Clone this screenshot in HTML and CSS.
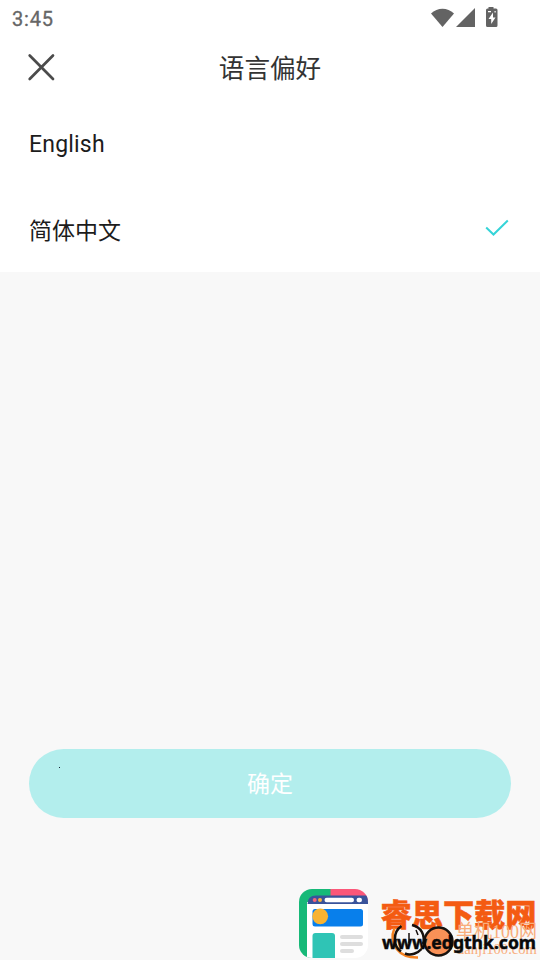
FILE: index.html
```html
<!DOCTYPE html>
<html lang="zh-CN">
<head>
<meta charset="utf-8">
<title>语言偏好</title>
<link rel="stylesheet" href="styles.css">
</head>
<body>
<div class="screen">
  <header class="top">
    <div class="status">
      <span class="time">3:45</span>
      <svg class="status-icons" width="68" height="22" viewBox="0 0 68 22" fill="#636363">
        <path d="M0 7.500C6.500 1.200 16.500 1.200 23 7.500L11.500 21Z"/>
        <path d="M44 2V21H25Z"/>
        <path d="M57.500 1h5v1.500h2.500q1.500 0 1.500 1.500V19.500q0 1.500-1.500 1.500H56.500q-1.500 0-1.500-1.500V4q0-1.500 1.500-1.500h1Z"/>
        <path fill="#fff" d="M62 6.500L57.500 13H60.200V18L64.500 11.500H62ZM57 5h3v1.200H57ZM63.500 5h1.200v1.500H63.500Z"/>
      </svg>
    </div>
    <div class="nav">
      <svg class="close" width="28" height="28" viewBox="0 0 28 28"><path d="M2.700 2.500L26 26M26 2.500L2.700 26" fill="none" stroke="#4b4b4b" stroke-width="2.700" stroke-linecap="round"/></svg>
      <h1 class="title">语言偏好</h1>
    </div>
  </header>
  <ul class="languages">
    <li class="language latin">English</li>
    <li class="language han">简体中文
      <svg class="check" width="26" height="20" viewBox="0 0 26 20"><path d="M2.200 9.500L9.500 16.500L23.800 2.500" fill="none" stroke="#35d4d8" stroke-width="2"/></svg>
    </li>
  </ul>
  <main class="content">
    <button class="confirm">确定<span class="speck"></span></button>
  </main>
  <div class="watermark">
    <svg width="244" height="76" viewBox="296 884 244 76">
      <defs><clipPath id="badge"><rect x="299" y="889" width="69" height="69" rx="13"/></clipPath></defs>
      <g clip-path="url(#badge)">
        <path fill="#17b978" d="M299 889h33v69h-33z"/>
        <path fill="#fb5779" d="M330.500 889H368v12h-37.500z"/>
        <path fill="#fff" d="M307 902h61v56h-61z"/>
        <path fill="#39539b" d="M307.500 904q0-8.500 8.500-8.500h52v8.500z"/>
      </g>
      <circle cx="314.700" cy="900" r="2" fill="#f4637b"/>
      <circle cx="320" cy="900" r="2" fill="#f6b43c"/>
      <rect x="324.500" y="897.800" width="29.500" height="4.400" rx="2.200" fill="#fff"/>
      <rect x="356.500" y="897.800" width="5.500" height="4.400" rx="2.200" fill="#fff"/>
      <rect x="312.500" y="909" width="50.500" height="17.500" rx="2.500" fill="#087feb"/>
      <circle cx="320.200" cy="916.300" r="7.900" fill="#f8b331"/>
      <path fill="#2fc4b5" d="M312.500 958v-22q0-3 3-3h16.500q3 0 3 3v22z"/>
      <g fill="#dedede"><rect x="340" y="935" width="23" height="4" rx="2"/><rect x="340" y="942" width="23" height="4" rx="2"/><rect x="340" y="949" width="14" height="4" rx="2"/></g>

      <text class="site-name" x="380.500" y="925.500" font-size="31" textLength="156" lengthAdjust="spacingAndGlyphs">睿思下载网</text>
      <text class="site-faint" x="456" y="938" font-size="19" textLength="81" lengthAdjust="spacingAndGlyphs">单机100网</text>
      <text class="site-faint" x="457" y="954" font-size="14" textLength="80" lengthAdjust="spacingAndGlyphs">danji100.com</text>
      <path d="M394.500 928C388 944 399 958 418 957.500" fill="none" stroke="#f58220" stroke-width="2.500"/>
      <path d="M401.500 926C392.500 932 393 946 401 951.500M405 953.500C411 956 418 953 421.500 949M423 944C425.500 935 421 927 412 925" fill="none" stroke="#17110e" stroke-width="2.500"/>
      <circle cx="438.500" cy="941.500" r="14" fill="#f99157" stroke="#17110e" stroke-width="2.500"/>
      <path d="M409 933v10M416 930l2 5" stroke="#17110e" stroke-width="1.500"/>
      <text class="site-url" x="382" y="948.500" font-size="18" textLength="154" lengthAdjust="spacingAndGlyphs">www.edgthk.com</text>
    </svg>
  </div>
</div>
</body>
</html>
```
FILE: styles.css
```css
* { box-sizing: border-box; }
body { margin: 0; background: #f8f8f8; font-family: Roboto, "Noto Sans CJK SC", sans-serif; }
.screen { position: relative; display: flex; flex-direction: column; height: 960px; overflow: hidden; }
.top { background: #fff; height: 101px; }
.status { display: flex; justify-content: space-between; height: 37px; padding: 6px 41px 0 12px; }
.time { font-size: 20px; line-height: 26px; font-weight: 400; letter-spacing: .8px; color: #666; -webkit-text-stroke: .3px #666; }
.status-icons { display: block; margin-left: auto; }
.nav { display: grid; grid-template-columns: 60px 1fr 60px; align-items: center; height: 60px; }
.close { margin-left: 27px; }
.title { margin: 0; padding-top: 3px; text-align: center; font-size: 25.600px; line-height: 38px; font-weight: 400; color: #333; }
.languages { list-style: none; margin: 0; padding: 0; background: #fff; }
.language { display: flex; align-items: center; justify-content: space-between; height: 85.500px; padding: 0 30px 0 29px; font-size: 23px; letter-spacing: .2px; color: #1c1c1c; }
.latin { padding-top: 2px; }
.han { padding-bottom: 1px; letter-spacing: 0; }
.check { margin-top: -2px; }
.content { flex: 1; display: flex; flex-direction: column; justify-content: flex-end; padding: 0 29px 142px; }
.confirm { position: relative; height: 69px; padding: 0 0 3px; border: 0; border-radius: 35px; background: #b3eeed; color: #fff; font: 400 23px "Noto Sans CJK SC", sans-serif; }
.speck { position: absolute; left: 30px; top: 18px; width: 1px; height: 1px; background: #123; }
.watermark { position: absolute; right: 0; bottom: 0; height: 76px; }
.watermark svg { display: block; }
.site-name { font-family: "Noto Sans CJK SC", sans-serif; font-weight: 900; fill: #f45b12; stroke: #f45b12; stroke-width: .5; }
.site-faint { font-family: "Liberation Serif", "Noto Sans CJK SC", serif; fill: #f9ad7c; }
.site-url { font-family: "Noto Sans", sans-serif; font-weight: 700; fill: #090909; stroke: #090909; stroke-width: .5; }
```
